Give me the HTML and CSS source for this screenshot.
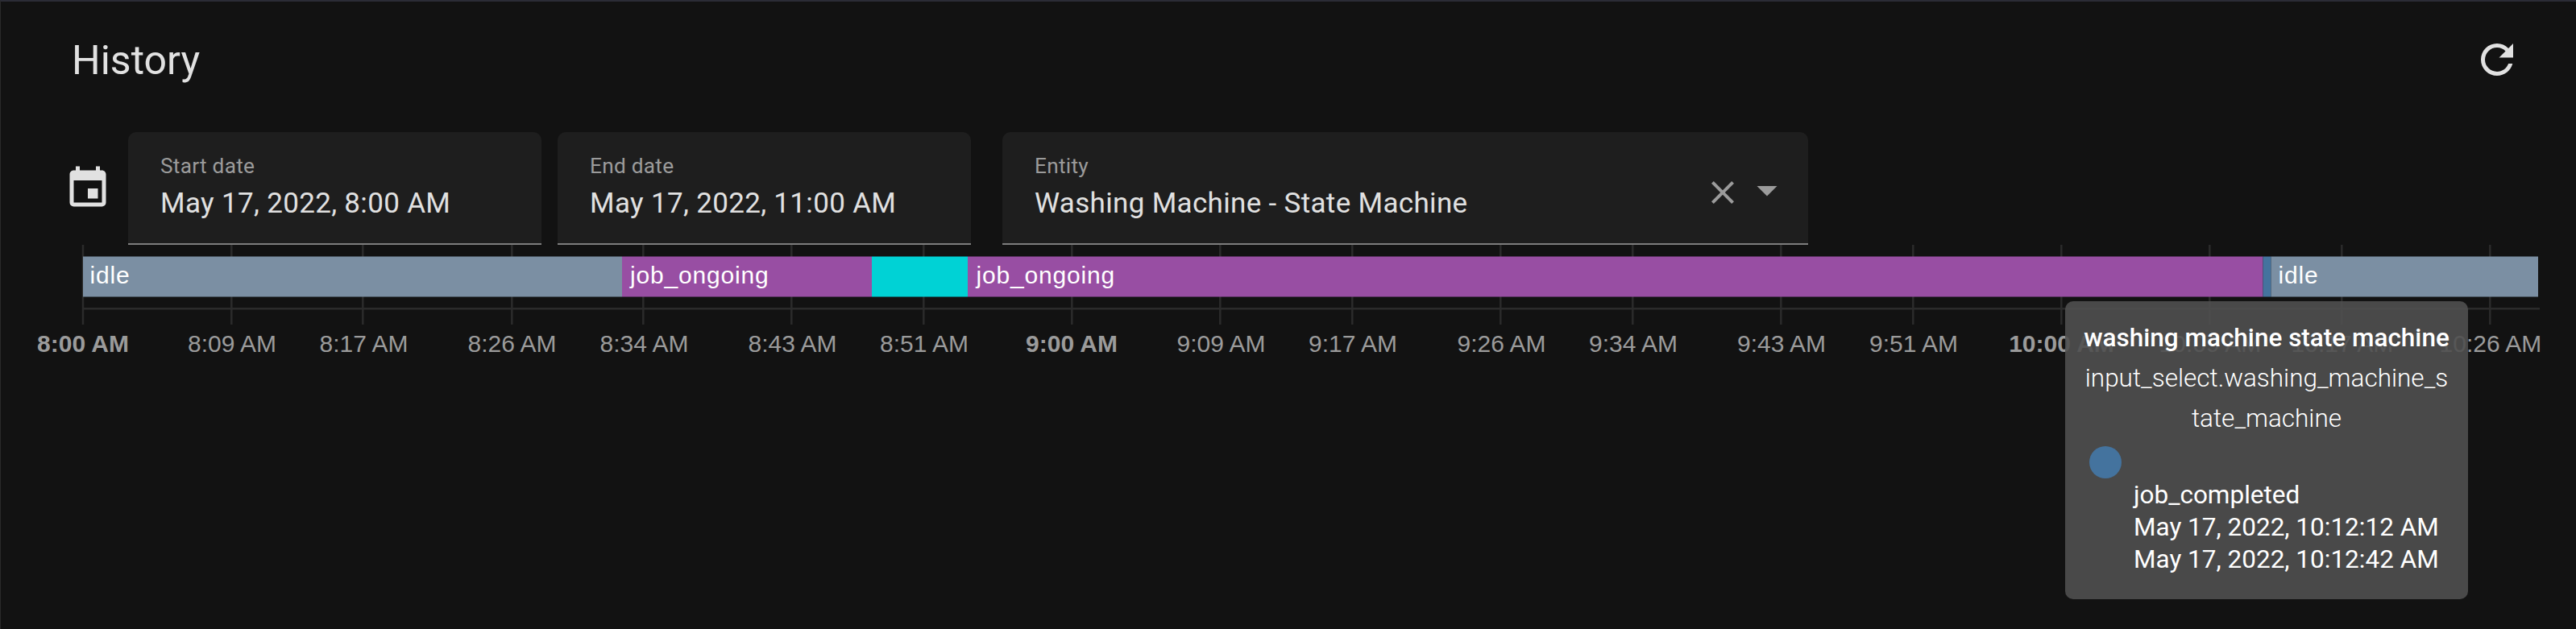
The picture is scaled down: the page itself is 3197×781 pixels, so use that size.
FILE: index.html
```html
<!DOCTYPE html>
<html lang="en">
<head>
<meta charset="utf-8">
<title>History</title>
<link rel="stylesheet" href="styles.css">
</head>
<body>
<main class="card">
  <header class="header">
    <h1 class="title">History</h1>
    <svg class="icon" viewBox="0 0 24 24"><path d="M17.65,6.35C16.2,4.9 14.21,4 12,4A8,8 0 0,0 4,12A8,8 0 0,0 12,20C15.73,20 18.84,17.45 19.73,14H17.65C16.83,16.33 14.61,18 12,18A6,6 0 0,1 6,12A6,6 0 0,1 12,6C13.66,6 15.14,6.69 16.22,7.78L13,11H20V4L17.65,6.35Z"/></svg>
  </header>
  <section class="filters">
    <svg class="icon calendar" viewBox="0 0 24 24"><path d="M19,19H5V8H19M16,1V3H8V1H6V3H5C3.89,3 3,3.89 3,5V19A2,2 0 0,0 5,21H19A2,2 0 0,0 21,19V5C21,3.89 20.1,3 19,3H18V1M17,12H12V17H17V12Z"/></svg>
    <div class="field date"><span class="label">Start date</span><span class="value">May 17, 2022, 8:00 AM</span></div>
    <div class="field date"><span class="label">End date</span><span class="value">May 17, 2022, 11:00 AM</span></div>
    <div class="field entity">
      <div class="field-text"><span class="label">Entity</span><span class="value">Washing Machine - State Machine</span></div>
      <div class="field-actions">
        <svg class="clear" viewBox="0 0 24 24"><path d="M19,6.41L17.59,5L12,10.59L6.41,5L5,6.41L10.59,12L5,17.59L6.41,19L12,13.41L17.59,19L19,17.59L13.41,12L19,6.41Z"/></svg>
        <svg class="caret" viewBox="0 0 24 24"><path d="M7,10L12,15L17,10H7Z"/></svg>
      </div>
    </div>
  </section>
  <section class="timeline">
    <svg class="chart" width="3197" height="146" viewBox="0 304 3197 146">
      <path class="grid" d="M103 304V403M287.3 304V403M450.3 304V403M635.3 304V403M798.3 304V403M982.3 304V403M1146.3 304V403M1330.3 304V403M1514.3 304V403M1678.3 304V403M1862.3 304V403M2026.3 304V403M2210.3 304V403M2374.3 304V403M2558.3 304V403M2742.3 304V403M2906.3 304V403M3090.3 304V403M103 383.3H3152"/>
      <rect class="idle" x="103" y="318.5" width="669" height="50"/>
      <rect class="ongoing" x="772" y="318.5" width="310" height="50"/>
      <rect class="paused" x="1082" y="318.5" width="119" height="50"/>
      <rect class="ongoing" x="1201" y="318.5" width="1607.5" height="50"/>
      <rect class="completed" x="2808.5" y="318.5" width="10" height="50"/>
      <rect class="idle" x="2818.5" y="318.5" width="331.5" height="50"/>
      <g class="state">
        <text x="111.5" y="352">idle</text>
        <text x="782" y="352">job_ongoing</text>
        <text x="1211.5" y="352">job_ongoing</text>
        <text x="2827.5" y="352">idle</text>
      </g>
      <g class="tick">
        <text class="major" x="103" y="436.7">8:00 AM</text>
        <text x="288" y="436.7">8:09 AM</text>
        <text x="451.5" y="436.7">8:17 AM</text>
        <text x="635.5" y="436.7">8:26 AM</text>
        <text x="799.5" y="436.7">8:34 AM</text>
        <text x="983.5" y="436.7">8:43 AM</text>
        <text x="1147" y="436.7">8:51 AM</text>
        <text class="major" x="1330" y="436.7">9:00 AM</text>
        <text x="1515.5" y="436.7">9:09 AM</text>
        <text x="1679" y="436.7">9:17 AM</text>
        <text x="1863.5" y="436.7">9:26 AM</text>
        <text x="2027" y="436.7">9:34 AM</text>
        <text x="2211" y="436.7">9:43 AM</text>
        <text x="2375" y="436.7">9:51 AM</text>
        <text class="major" x="2558.5" y="436.7">10:00 AM</text>
        <text x="2743" y="436.7">10:09 AM</text>
        <text x="2907" y="436.7">10:17 AM</text>
        <text x="3091" y="436.7">10:26 AM</text>
      </g>
    </svg>
    <aside class="tooltip">
      <div class="tip-title">washing machine state machine</div>
      <div class="tip-entity">input_select.washing_machine_s<br>tate_machine</div>
      <div class="tip-body">
        <span class="dot"></span>
        <div class="tip-lines">job_completed<br>May 17, 2022, 10:12:12 AM<br>May 17, 2022, 10:12:42 AM</div>
      </div>
    </aside>
  </section>
</main>
</body>
</html>
```
FILE: styles.css
```css
* { box-sizing: border-box; }
body {
  margin: 0;
  background: #121212;
  color: #e1e1e1;
  font-family: Roboto, "Liberation Sans", sans-serif;
}
.card {
  height: 781px;
  overflow: hidden;
  border-top: 2px solid #2b2c36;
  border-left: 1px solid #2a2a2a;
}
.header {
  height: 162px;
  padding: 42px 68px 0 88px;
  display: flex;
  justify-content: space-between;
  align-items: flex-start;
}
.title { margin: 0; font-size: 50px; font-weight: 400; line-height: 62px; }
.icon { width: 60px; height: 60px; fill: currentColor; flex: none; }
.filters { display: flex; height: 140px; padding-left: 78px; }
.calendar { margin: 39.5px 20px 0 0; }
.field {
  height: 140px;
  background: #1e1e1e;
  border-radius: 10px 10px 0 0;
  border-bottom: 2px solid #7d7d7d;
  padding: 27px 0 0 40px;
}
.date { width: 513px; margin-right: 20px; }
.entity { width: 1000px; margin-left: 19px; display: flex; justify-content: space-between; padding-right: 21px; }
.label { display: block; font-size: 26.25px; line-height: 31px; letter-spacing: 0.25px; color: #9b9b9b; }
.value { display: block; margin-top: 10px; font-size: 35px; line-height: 42px; letter-spacing: 0.33px; }
.field-actions { display: flex; fill: #9b9b9b; }
.clear { width: 48px; height: 48px; margin: 24px 1px 0 0; }
.caret { width: 60px; height: 60px; margin-top: 15px; }
.timeline { position: relative; margin-left: -1px; }
.chart { display: block; font-family: "Liberation Sans", Arial, sans-serif; font-size: 30px; }
.grid { stroke: #2b2b2b; stroke-width: 2.5; fill: none; }
.idle { fill: #7b8fa3; }
.ongoing { fill: #984ea3; }
.paused { fill: #00d2d5; }
.completed { fill: #44739e; }
.state { fill: #fff; letter-spacing: 0.83px; }
.tick { fill: #9b9b9b; text-anchor: middle; }
.major { font-weight: 700; }
.tooltip {
  position: absolute;
  left: 2563px;
  top: 70px;
  width: 500px;
  height: 370px;
  border-radius: 10px;
  background: rgba(80, 80, 80, 0.9);
  color: #fff;
  padding: 21px 10px;
  font-size: 31.5px;
  white-space: nowrap;
}
.tip-title { text-align: center; font-weight: 500; line-height: 50px; }
.tip-entity { text-align: center; font-weight: 300; line-height: 50px; }
.tip-body { display: flex; padding: 9px 0 0 20px; }
.dot { width: 40px; height: 40px; border-radius: 50%; background: #44739e; }
.tip-lines { margin: 41px 0 0 15px; line-height: 40px; }
```
